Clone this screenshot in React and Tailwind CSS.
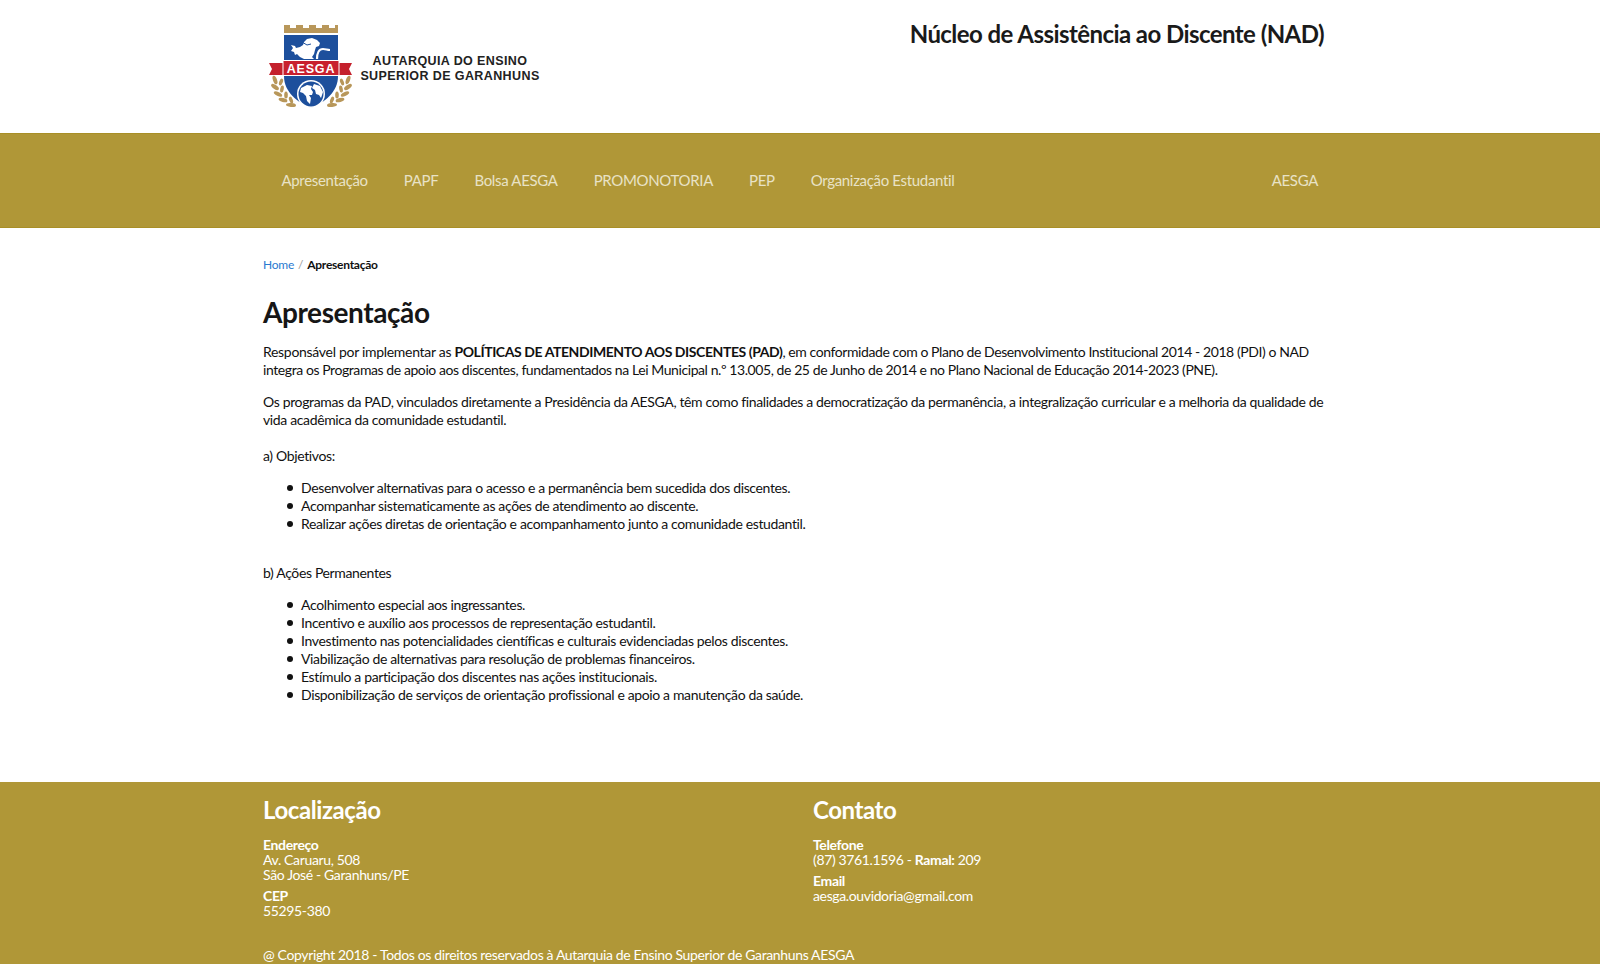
import React from "react";

const navItems = ["Apresentação", "PAPF", "Bolsa AESGA", "PROMONOTORIA", "PEP", "Organização Estudantil"];
const objetivos = [
  "Desenvolver alternativas para o acesso e a permanência bem sucedida dos discentes.",
  "Acompanhar sistematicamente as ações de atendimento ao discente.",
  "Realizar ações diretas de orientação e acompanhamento junto a comunidade estudantil.",
];
const acoes = [
  "Acolhimento especial aos ingressantes.",
  "Incentivo e auxílio aos processos de representação estudantil.",
  "Investimento nas potencialidades científicas e culturais evidenciadas pelos discentes.",
  "Viabilização de alternativas para resolução de problemas financeiros.",
  "Estímulo a participação dos discentes nas ações institucionais.",
  "Disponibilização de serviços de orientação profissional e apoio a manutenção da saúde.",
];

function Laurel() {
  return (
    <g fill="#b8975a">
      <ellipse cx="13" cy="62" rx="4.500" ry="2" transform="rotate(70 13 62)" />
      <ellipse cx="19" cy="64" rx="3.500" ry="1.800" transform="rotate(110 19 64)" />
      <ellipse cx="13" cy="69" rx="4.500" ry="2" transform="rotate(35 13 69)" />
      <ellipse cx="20" cy="71" rx="3.500" ry="1.800" transform="rotate(100 20 71)" />
      <ellipse cx="16" cy="76" rx="4.500" ry="2" transform="rotate(25 16 76)" />
      <ellipse cx="24" cy="77" rx="3.500" ry="1.800" transform="rotate(90 24 77)" />
      <ellipse cx="21" cy="82" rx="4.500" ry="2" transform="rotate(15 21 82)" />
      <ellipse cx="29" cy="82" rx="3.500" ry="1.800" transform="rotate(70 29 82)" />
      <ellipse cx="29" cy="87" rx="5" ry="2" transform="rotate(5 29 87)" />
    </g>
  );
}

function Crest() {
  return (
    <svg width="100" height="96" viewBox="0 0 100 96" className="shrink-0">
      {/* battlements */}
      <path d="M22 7h6v3h6V7h7v3h6V7h7v3h6V7h7v3h6V7h3v8H22z" fill="#b8975a" />
      <Laurel />
      <g transform="translate(99 0) scale(-1 1)">
        <Laurel />
      </g>
      {/* shield */}
      <path d="M22 17h54v41c0 16-13 26-27 32C35 84 22 74 22 58z" fill="#1d4f9c" />
      {/* lion */}
      <path d="M29 27l4 1 1 2 4-1 3-2 1-3 3-3 5-1 5 2 3 3-1 3-3 1-1 3-1 4-2 3 2 2H42l-4-2-3-3-2 1-1-3-3-1 2-3z" fill="#fff" />
      <path d="M55 41c0-6 2-10 6-10 3 0 4 1 7 1" fill="none" stroke="#fff" strokeWidth="2.200" />
      <path d="M40 24l5 3 4-1" fill="none" stroke="#1d4f9c" strokeWidth="1" />
      {/* banner */}
      <path d="M7 45h15v12H7l3-6z" fill="#c4202c" />
      <path d="M90 45H75v12h15l-3-6z" fill="#c4202c" />
      <rect x="21" y="42.500" width="56" height="15" fill="#c8202e" stroke="#fff" strokeWidth="1" />
      <text x="49" y="54.500" textAnchor="middle" fill="#fff" fontFamily="Liberation Sans, sans-serif" fontWeight="700" fontSize="12.500" letterSpacing="0.8">AESGA</text>
      {/* globe */}
      <circle cx="49" cy="76" r="14" fill="#fff" />
      <circle cx="49" cy="76" r="12.500" fill="#1d4f9c" />
      <path d="M39 70l6-3 5 1-1 3 2 3-1 3-3 0 2 3-1 6-3-3-1-5-3-3-3-1zM52 66l6 2 3 6-2 6-2-3-3-1-1-4-3-2z" fill="#fff" />
    </svg>
  );
}

function BulletList({ items }) {
  return (
    <ul className="mt-[14px] pl-[38px]">
      {items.map((t) => (
        <li key={t} className="relative before:content-[''] before:absolute before:left-[-14px] before:top-[6px] before:w-[6px] before:h-[6px] before:rounded-full before:bg-[#111]">
          {t}
        </li>
      ))}
    </ul>
  );
}

export default function App() {
  return (
    <div className="min-h-[964px] flex flex-col bg-white text-[#111] font-['Lato','Open_Sans',sans-serif]">
      {/* Header */}
      <header className="h-[133px] bg-white">
        <div className="w-[1074px] mx-auto flex justify-between">
          <div className="flex items-start pt-[18px] ml-[-1px]">
            <Crest />
            <div className="mt-[36px] ml-[-2px] w-[180px] text-center font-['Liberation_Sans',sans-serif] font-bold text-[12.5px] tracking-[0.4px] leading-[15px] text-[#222]">
              <div>AUTARQUIA DO ENSINO</div>
              <div className="whitespace-nowrap">SUPERIOR DE GARANHUNS</div>
            </div>
          </div>
          <h2 className="pt-[18px] pr-[13px] text-[24px] tracking-[-0.56px] leading-[32px] font-bold text-[#1a1a1a]">Núcleo de Assistência ao Discente (NAD)</h2>
        </div>
      </header>

      {/* Nav */}
      <nav className="h-[95px] bg-[#b09737] border-y border-[#a98f26]">
        <div className="w-[1074px] mx-auto h-full pl-[18.5px] pr-[19px] pb-[1px] flex items-center justify-between text-[15px] tracking-[-0.33px] text-[#e8e2c6]">
          <div className="flex gap-[36px]">
            {navItems.map((item) => (
              <a key={item} href="#">{item}</a>
            ))}
          </div>
          <a href="#">AESGA</a>
        </div>
      </nav>

      {/* Content */}
      <main className="flex-1 w-[1074px] mx-auto pt-[28px] text-[14px] tracking-[-0.36px] leading-[18px]">
        <div className="flex items-center text-[12px] tracking-[-0.25px] leading-[18px]">
          <a href="#" className="text-[#2a7ad0]">Home</a>
          <span className="mx-[4px] text-[#999]">/</span>
          <span className="font-bold text-[#111]">Apresentação</span>
        </div>
        <h1 className="mt-[21px] text-[28px] tracking-[-0.42px] leading-[34px] font-bold text-[#161616]">Apresentação</h1>
        <p className="mt-[14px] tracking-[-0.42px]">
          <span className="tracking-[-0.3px]">Responsável por implementar as </span><strong>POLÍTICAS DE ATENDIMENTO AOS DISCENTES (PAD)</strong>, em conformidade com o Plano de Desenvolvimento Institucional 2014 - 2018 (PDI) o NAD integra os Programas de apoio aos discentes, fundamentados na Lei Municipal n.º 13.005, de 25 de Junho de 2014 e no Plano Nacional de Educação 2014-2023 (PNE).
        </p>
        <p className="mt-[14px]">
          Os programas da PAD, vinculados diretamente a Presidência da AESGA, têm como finalidades a democratização da permanência, a integralização curricular e a melhoria da qualidade de vida acadêmica da comunidade estudantil.
        </p>
        <p className="mt-[18px]">a) Objetivos:</p>
        <BulletList items={objetivos} />
        <p className="mt-[31px]">b) Ações Permanentes</p>
        <BulletList items={acoes} />
      </main>

      {/* Footer */}
      <footer className="h-[182px] bg-[#b09737] text-white text-[14px] tracking-[-0.36px] leading-[15px]">
        <div className="w-[1074px] mx-auto pt-[13px]">
          <div className="flex">
            <div className="w-[550px]">
              <h3 className="text-[24px] tracking-[-0.42px] leading-[29px] font-bold">Localização</h3>
              <p className="mt-[13px]"><strong>Endereço</strong><br />Av. Caruaru, 508<br />São José - Garanhuns/PE</p>
              <p className="mt-[6px]"><strong>CEP</strong><br />55295-380</p>
            </div>
            <div>
              <h3 className="text-[24px] tracking-[-0.42px] leading-[29px] font-bold">Contato</h3>
              <p className="mt-[13px]"><strong>Telefone</strong><br />(87) 3761.1596 - <strong>Ramal:</strong> 209</p>
              <p className="mt-[6px]"><strong>Email</strong><br />aesga.ouvidoria@gmail.com</p>
            </div>
          </div>
          <p className="mt-[29px]">@ Copyright 2018 - Todos os direitos reservados à Autarquia de Ensino Superior de Garanhuns AESGA</p>
        </div>
      </footer>
    </div>
  );
}
